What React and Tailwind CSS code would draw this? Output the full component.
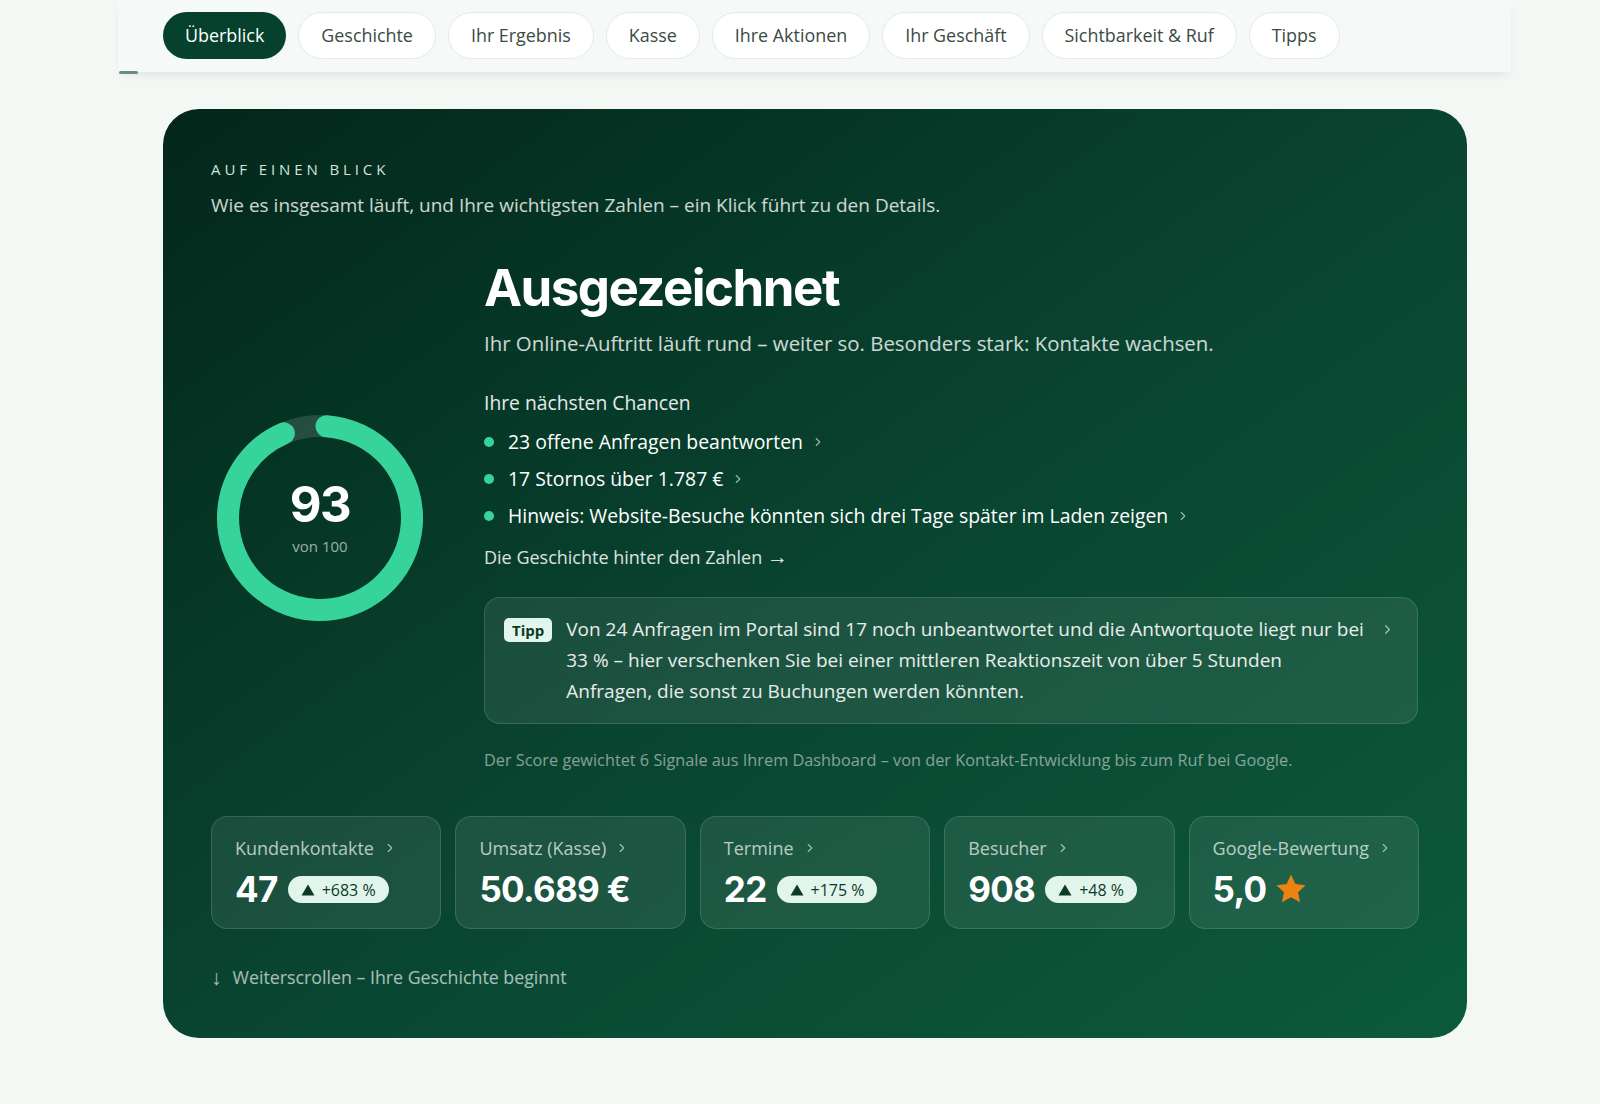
import React from "react";

const navItems = ["Überblick", "Geschichte", "Ihr Ergebnis", "Kasse", "Ihre Aktionen", "Ihr Geschäft", "Sichtbarkeit & Ruf", "Tipps"];

function Chevron({ className = "" }) {
  return (
    <svg viewBox="0 0 24 24" className={className} fill="none" stroke="currentColor" strokeWidth="2" strokeLinecap="round" strokeLinejoin="round">
      <path d="M9 6l6 6-6 6" />
    </svg>
  );
}

function Ring() {
  const r = 92;
  const c = 2 * Math.PI * r;
  const pct = 0.93;
  return (
    <svg width="208" height="208" viewBox="0 0 208 208" className="block">
      <circle cx="104" cy="104" r={r} fill="none" stroke="rgba(255,255,255,0.13)" strokeWidth="22" />
      <circle
        cx="104"
        cy="104"
        r={r}
        fill="none"
        stroke="#36d49a"
        strokeWidth="22"
        strokeLinecap="round"
        strokeDasharray={`${c * pct - 4} ${c}`}
        transform="rotate(-86 104 104)"
      />
    </svg>
  );
}

function Badge({ children }) {
  return (
    <span className="inline-flex items-center gap-[7px] h-[27px] pl-[13px] pr-[13px] rounded-full bg-[#e2f5ec] text-[#0b3a28] text-[16px] leading-none">
      <svg viewBox="0 0 14 12" className="w-[14px] h-[12px]">
        <path d="M7 0.5L13.5 11.5H0.5Z" fill="#0b3a28" />
      </svg>
      {children}
    </span>
  );
}

function StatCard({ label, value, badge, star }) {
  return (
    <div className="h-[113px] rounded-[16px] border border-white/[0.13] bg-white/[0.08] px-[23px] pt-[20px]">
      <div className="flex items-center gap-[9px] text-[18px] text-white/70 leading-none h-[22px]">
        <span>{label}</span>
        <Chevron className="w-[14px] h-[14px] text-white/60" />
      </div>
      <div className="mt-[13px] flex items-center gap-[10px]">
        <span className="text-[35px] font-bold text-white leading-none tracking-[-0.02em]" style={{ fontFamily: "Inter, sans-serif" }}>{value}</span>
        {badge && <Badge>{badge}</Badge>}
        {star && (
          <svg viewBox="0 0 24 24" className="w-[34px] h-[34px] -mt-[2px] -ml-[2px]">
            <path fill="#ec820f" d="M12 1.8l3.1 6.6 7.2.9-5.3 5 1.4 7.1L12 17.9l-6.4 3.5 1.4-7.1-5.3-5 7.2-.9z" />
          </svg>
        )}
      </div>
    </div>
  );
}

export default function App() {
  return (
    <div className="min-h-[1104px] bg-[#f3f8f5]" style={{ fontFamily: "'Open Sans', sans-serif" }}>
      <div className="ml-[118px] w-[1393px]">
        <div className="relative bg-[#f5f9f7] shadow-[0_6px_10px_-4px_rgba(0,40,20,0.10)] pt-[12px] pb-[13px] pl-[45px]">
          <div className="flex items-center gap-[12px]">
            {navItems.map((n, i) => (
              <div
                key={n}
                className={
                  i === 0
                    ? "h-[47px] px-[22px] rounded-full bg-[#05412c] text-white text-[17.9px] flex items-center"
                    : "h-[47px] px-[22px] rounded-full bg-white border border-[#e4ebe7] text-[#3b4a43] text-[17.9px] flex items-center"
                }
              >
                {n}
              </div>
            ))}
          </div>
          <div className="absolute left-[1px] bottom-[-2px] w-[19px] h-[3px] rounded bg-[#6d8a7e]" />
        </div>

        <div className="mt-[37px] ml-[45px] w-[1304px] h-[929px] rounded-[36px] bg-gradient-to-br from-[#03271a] via-[#094430] to-[#0c5a3d] px-[48px] pt-[53px] relative overflow-hidden">
          <div className="text-[15px] tracking-[0.26em] text-[#d3e3da] leading-none font-medium">AUF EINEN BLICK</div>
          <div className="mt-[15px] text-[19px] text-white/80 leading-[26px]">
            Wie es insgesamt läuft, und Ihre wichtigsten Zahlen – ein Klick führt zu den Details.
          </div>

          <div className="mt-[47px] flex items-center">
            <div className="w-[218px] flex justify-center">
              <div className="relative w-[208px] h-[208px]">
                <Ring />
                <div className="absolute inset-0 flex flex-col items-center justify-center">
                  <div className="text-[49px] font-bold text-white leading-none mt-[-2px] tracking-[-0.03em]" style={{ fontFamily: "Inter, sans-serif" }}>93</div>
                  <div className="mt-[10px] text-[15px] text-white/60 leading-none">von 100</div>
                </div>
              </div>
            </div>

            <div className="ml-[55px] flex-1">
              <h1 className="-mt-[3px] text-[51px] font-bold text-white leading-none tracking-[-0.03em]" style={{ fontFamily: "Inter, sans-serif" }}>Ausgezeichnet</h1>
              <p className="mt-[16px] text-[20.4px] text-white/80 leading-[28px]">
                Ihr Online-Auftritt läuft rund – weiter so. Besonders stark: Kontakte wachsen.
              </p>
              <div className="mt-[34px] text-[19.3px] text-white/90 leading-[24px]">Ihre nächsten Chancen</div>
              <ul className="mt-[15px] flex flex-col gap-[13px]">
                {[
                  "23 offene Anfragen beantworten",
                  "17 Stornos über 1.787 €",
                  "Hinweis: Website-Besuche könnten sich drei Tage später im Laden zeigen",
                ].map((t) => (
                  <li key={t} className="flex items-center h-[24px] text-[19.4px] text-white font-medium">
                    <span className="w-[10px] h-[10px] rounded-full bg-[#36d49a] mr-[14px]" />
                    <span>{t}</span>
                    <Chevron className="ml-[8px] w-[14px] h-[14px] text-white/60" />
                  </li>
                ))}
              </ul>
              <div className="mt-[17px] text-[18px] text-white/85 leading-[24px]">Die Geschichte hinter den Zahlen <span className="text-[21px] leading-none">→</span></div>

              <div className="mt-[28px] w-[934px] rounded-[16px] border border-white/[0.13] bg-white/[0.08] pl-[19px] pr-[22px] pt-[16px] pb-[16px] flex items-start">
                <span className="mt-[4px] shrink-0 rounded-[5px] bg-[#e2f5ec] text-[#0b3a28] text-[15px] font-bold px-[8px] h-[24px] flex items-center">Tipp</span>
                <p className="ml-[14px] text-[19px] text-white/90 leading-[31px] flex-1 whitespace-nowrap">
                  Von 24 Anfragen im Portal sind 17 noch unbeantwortet und die Antwortquote liegt nur bei
                  <br />
                  33 % – hier verschenken Sie bei einer mittleren Reaktionszeit von über 5 Stunden
                  <br />
                  Anfragen, die sonst zu Buchungen werden könnten.
                </p>
                <Chevron className="ml-[12px] mt-[8px] w-[15px] h-[15px] text-white/60 shrink-0" />
              </div>

              <div className="mt-[26px] text-[16.3px] text-white/50 leading-[20px]">
                Der Score gewichtet 6 Signale aus Ihrem Dashboard – von der Kontakt-Entwicklung bis zum Ruf bei Google.
              </div>
            </div>
          </div>

          <div className="mt-[46px] grid grid-cols-5 gap-[14px]">
            <StatCard label="Kundenkontakte" value="47" badge="+683 %" />
            <StatCard label="Umsatz (Kasse)" value="50.689 €" />
            <StatCard label="Termine" value="22" badge="+175 %" />
            <StatCard label="Besucher" value="908" badge="+48 %" />
            <StatCard label="Google-Bewertung" value="5,0" star />
          </div>

          <div className="mt-[38px] flex items-center gap-[11px] text-[17.8px] text-white/65 leading-none">
            <span className="text-[21px] font-light">↓</span>
            <span>Weiterscrollen – Ihre Geschichte beginnt</span>
          </div>
        </div>
      </div>
    </div>
  );
}
